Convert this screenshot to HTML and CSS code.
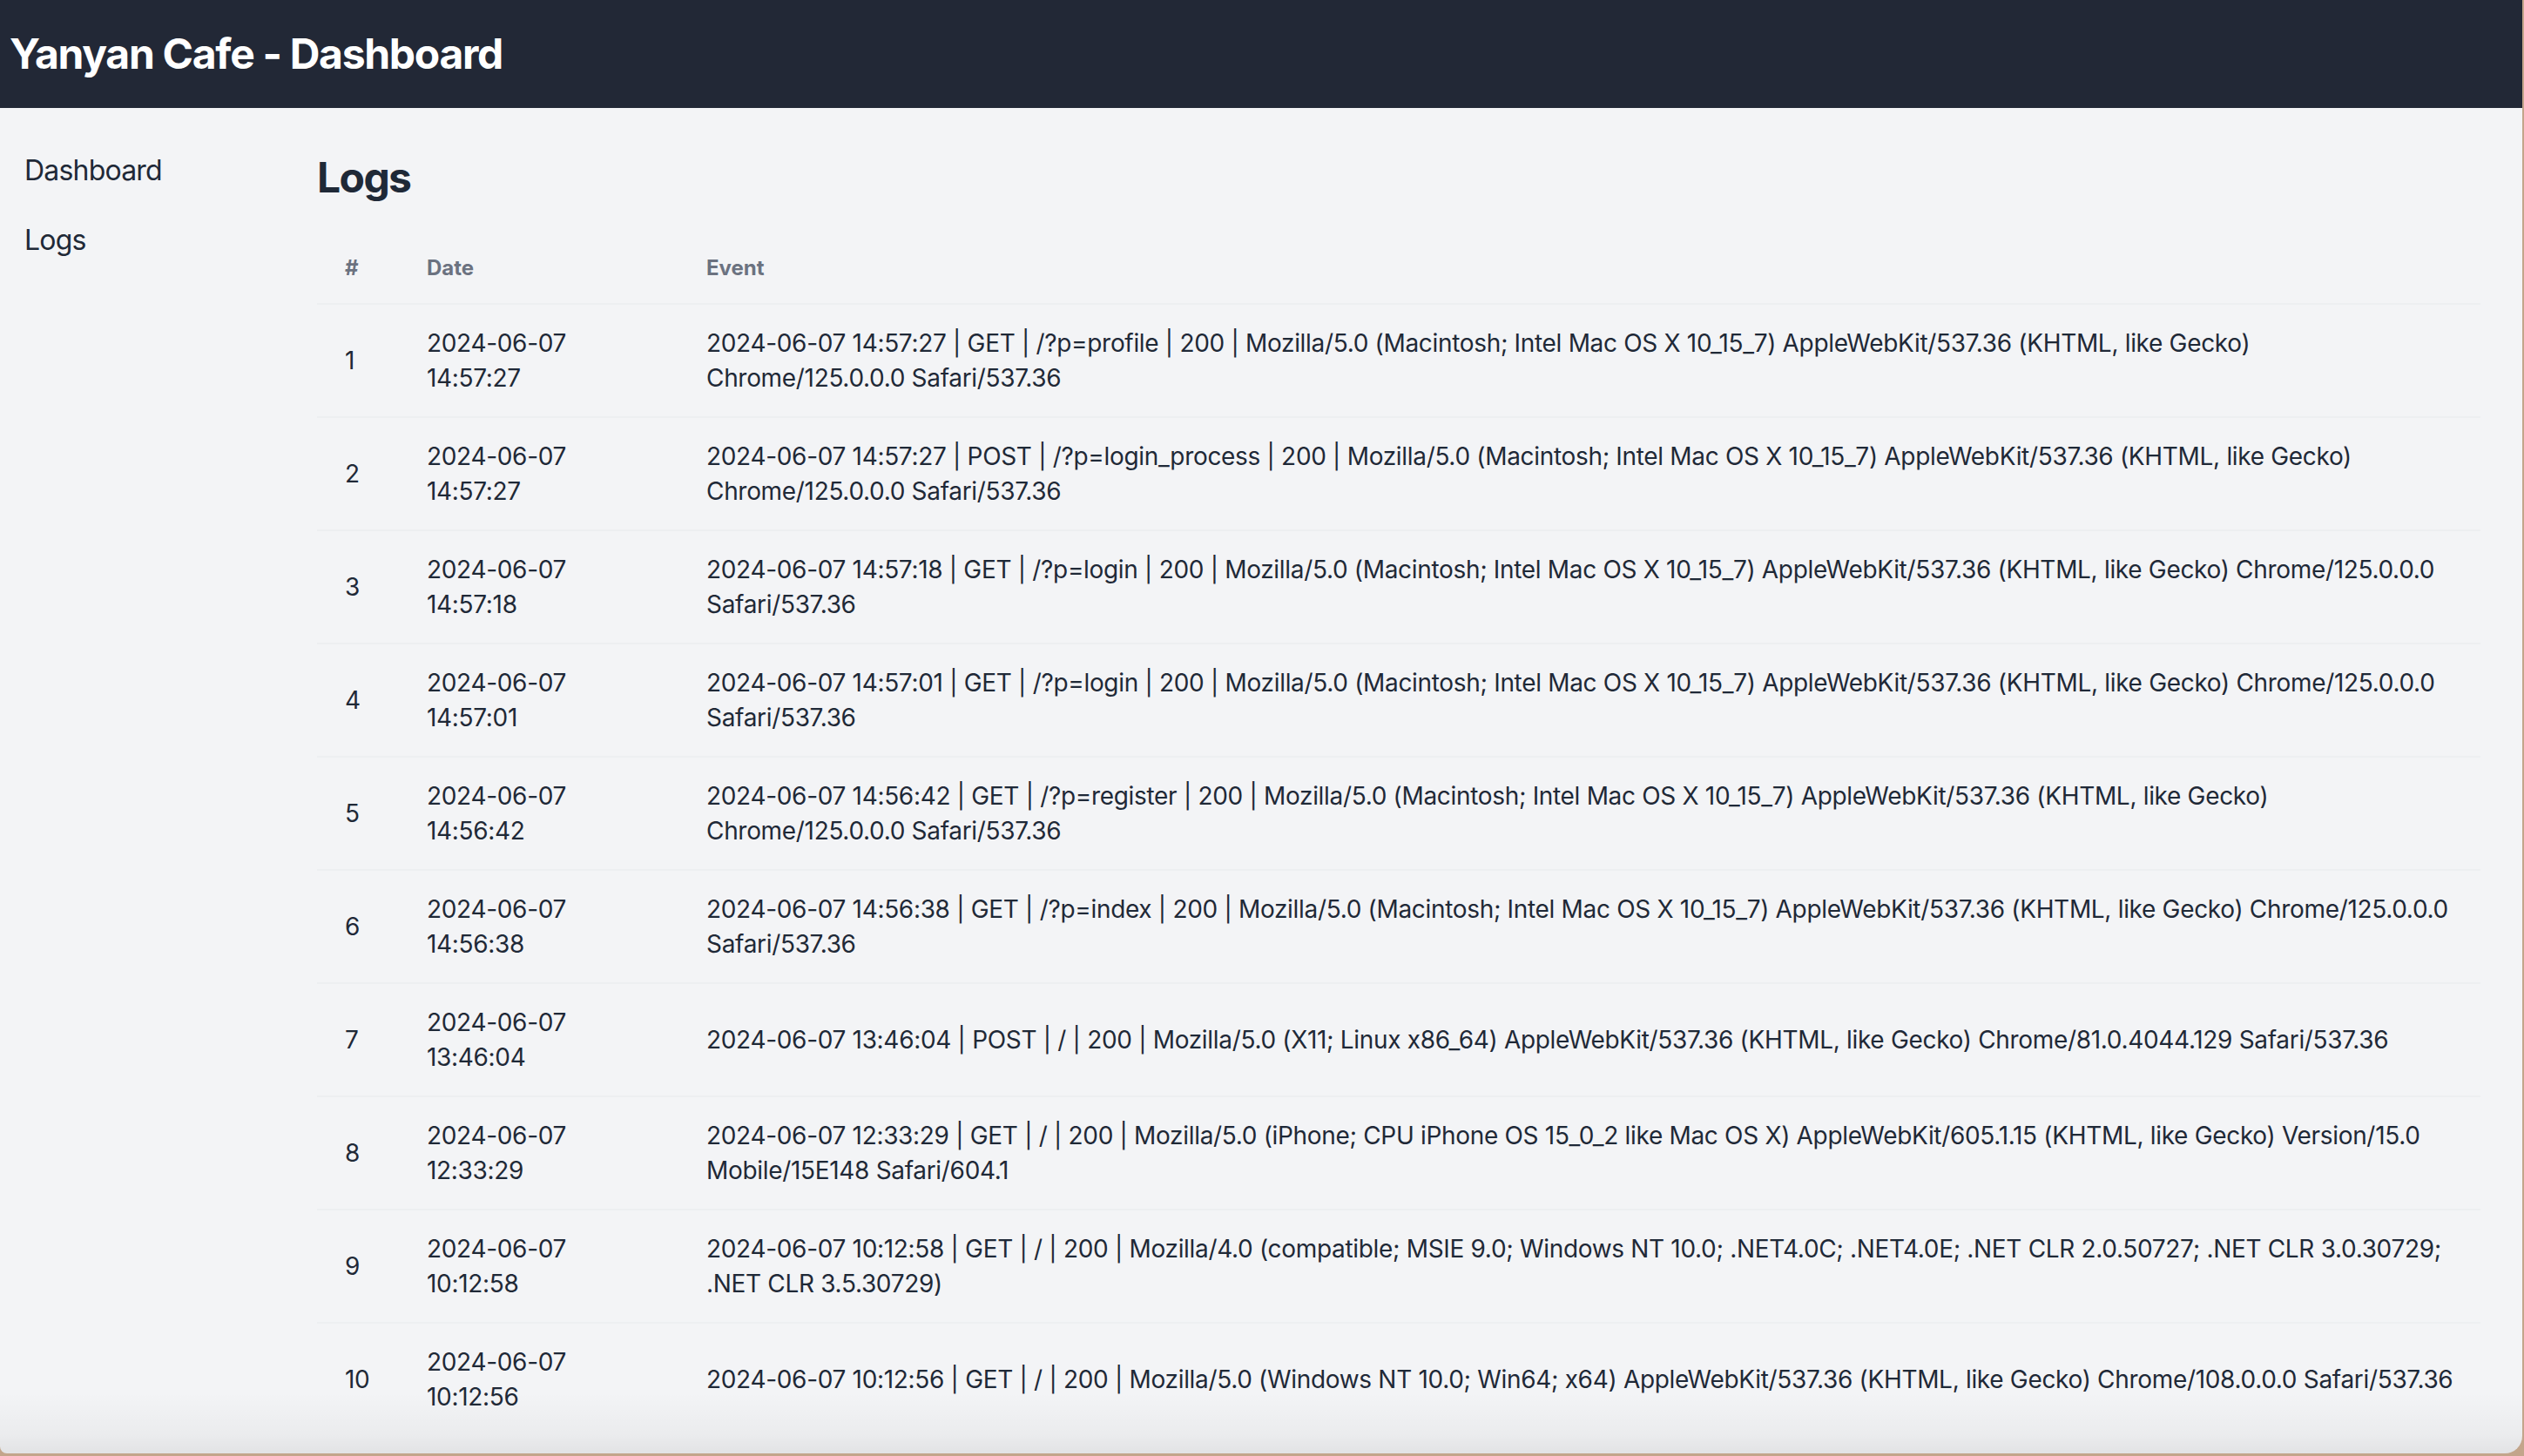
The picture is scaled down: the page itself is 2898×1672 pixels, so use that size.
FILE: index.html
```html
<!DOCTYPE html>
<html lang="en">
<head>
<meta charset="utf-8">
<title>Yanyan Cafe - Dashboard</title>
<link rel="stylesheet" href="styles.css">
</head>
<body>
<div class="window">
  <header class="topbar">
    <h1 class="brand">Yanyan Cafe - Dashboard</h1>
  </header>
  <div class="layout">
    <nav class="sidebar">
      <a class="nav-link" href="#">Dashboard</a>
      <a class="nav-link" href="#">Logs</a>
    </nav>
    <main class="main">
      <h2 class="page-title">Logs</h2>
      <table class="log-table">
        <colgroup>
          <col class="col-num">
          <col class="col-date">
          <col class="col-event">
        </colgroup>
        <thead>
          <tr><th>#</th><th>Date</th><th>Event</th></tr>
        </thead>
        <tbody>
          <tr><td>1</td><td>2024-06-07 14:57:27</td><td>2024-06-07 14:57:27 | GET | /?p=profile | 200 | Mozilla/5.0 (Macintosh; Intel Mac OS X 10_15_7) AppleWebKit/537.36 (KHTML, like Gecko) Chrome/125.0.0.0 Safari/537.36</td></tr>
          <tr><td>2</td><td>2024-06-07 14:57:27</td><td>2024-06-07 14:57:27 | POST | /?p=login_process | 200 | Mozilla/5.0 (Macintosh; Intel Mac OS X 10_15_7) AppleWebKit/537.36 (KHTML, like Gecko) Chrome/125.0.0.0 Safari/537.36</td></tr>
          <tr><td>3</td><td>2024-06-07 14:57:18</td><td>2024-06-07 14:57:18 | GET | /?p=login | 200 | Mozilla/5.0 (Macintosh; Intel Mac OS X 10_15_7) AppleWebKit/537.36 (KHTML, like Gecko) Chrome/125.0.0.0 Safari/537.36</td></tr>
          <tr><td>4</td><td>2024-06-07 14:57:01</td><td>2024-06-07 14:57:01 | GET | /?p=login | 200 | Mozilla/5.0 (Macintosh; Intel Mac OS X 10_15_7) AppleWebKit/537.36 (KHTML, like Gecko) Chrome/125.0.0.0 Safari/537.36</td></tr>
          <tr><td>5</td><td>2024-06-07 14:56:42</td><td>2024-06-07 14:56:42 | GET | /?p=register | 200 | Mozilla/5.0 (Macintosh; Intel Mac OS X 10_15_7) AppleWebKit/537.36 (KHTML, like Gecko) Chrome/125.0.0.0 Safari/537.36</td></tr>
          <tr><td>6</td><td>2024-06-07 14:56:38</td><td>2024-06-07 14:56:38 | GET | /?p=index | 200 | Mozilla/5.0 (Macintosh; Intel Mac OS X 10_15_7) AppleWebKit/537.36 (KHTML, like Gecko) Chrome/125.0.0.0 Safari/537.36</td></tr>
          <tr><td>7</td><td>2024-06-07 13:46:04</td><td class="one-line">2024-06-07 13:46:04 | POST | / | 200 | Mozilla/5.0 (X11; Linux x86_64) AppleWebKit/537.36 (KHTML, like Gecko) Chrome/81.0.4044.129 Safari/537.36</td></tr>
          <tr><td>8</td><td>2024-06-07 12:33:29</td><td>2024-06-07 12:33:29 | GET | / | 200 | Mozilla/5.0 (iPhone; CPU iPhone OS 15_0_2 like Mac OS X) AppleWebKit/605.1.15 (KHTML, like Gecko) Version/15.0 Mobile/15E148 Safari/604.1</td></tr>
          <tr><td>9</td><td>2024-06-07 10:12:58</td><td>2024-06-07 10:12:58 | GET | / | 200 | Mozilla/4.0 (compatible; MSIE 9.0; Windows NT 10.0; .NET4.0C; .NET4.0E; .NET CLR 2.0.50727; .NET CLR 3.0.30729; .NET CLR 3.5.30729)</td></tr>
          <tr><td>10</td><td>2024-06-07 10:12:56</td><td class="one-line">2024-06-07 10:12:56 | GET | / | 200 | Mozilla/5.0 (Windows NT 10.0; Win64; x64) AppleWebKit/537.36 (KHTML, like Gecko) Chrome/108.0.0.0 Safari/537.36</td></tr>
        </tbody>
      </table>
    </main>
  </div>
</div>
</body>
</html>
```
FILE: styles.css
```css
html, body {
  margin: 0;
  padding: 0;
}
body {
  background: #c3a58b;
  width: 2898px;
  height: 1672px;
  overflow: hidden;
  font-family: Inter, "Noto Sans", "Liberation Sans", sans-serif;
  color: #1f2937;
}
.window {
  position: relative;
  width: 2896px;
  height: 1669px;
  background: #f3f4f6;
  border-radius: 0 0 20px 8px;
  overflow: hidden;
}
.window::after {
  content: "";
  position: absolute;
  left: 0;
  right: 0;
  bottom: 0;
  height: 70px;
  pointer-events: none;
  background: linear-gradient(to bottom, rgba(0,0,0,0) 0%, rgba(0,0,0,0.035) 70%, rgba(0,0,0,0.07) 100%);
}
.topbar {
  height: 124px;
  background: #222836;
  display: flex;
  align-items: center;
  padding-left: 11px;
}
.brand {
  margin: 0;
  color: #ffffff;
  font-size: 48px;
  line-height: 64px;
  font-weight: 700;
  letter-spacing: -1.3px;
}
.layout {
  display: flex;
}
.sidebar {
  width: 316px;
  flex-shrink: 0;
  padding-top: 32px;
  display: flex;
  flex-direction: column;
}
.nav-link {
  display: block;
  padding: 16px 0 16px 28px;
  font-size: 32px;
  line-height: 48px;
  color: #1f2937;
  text-decoration: none;
  letter-spacing: -0.8px;
}
.main {
  flex: 1;
  padding: 48px 48px 0 48px;
}
.page-title {
  margin: 0 0 32px 0;
  font-size: 48px;
  line-height: 64px;
  font-weight: 700;
  color: #1f2937;
  letter-spacing: -1.6px;
}
.log-table {
  width: 100%;
  border-collapse: collapse;
  table-layout: fixed;
}
.col-num { width: 94px; }
.col-date { width: 321px; }
.log-table th {
  text-align: left;
  font-size: 24px;
  line-height: 32px;
  font-weight: 700;
  color: #6b7280;
  padding: 24px 32px;
  border-bottom: 2px solid #edeff1;
}
.log-table td {
  font-size: 28px;
  line-height: 40px;
  padding: 24px 32px;
  color: #1f2937;
  vertical-align: middle;
  letter-spacing: -0.32px;
  border-bottom: 2px solid #edeff1;
}
.log-table td.one-line {
  white-space: nowrap;
}
.log-table tbody tr:last-child td {
  border-bottom: none;
}
```
